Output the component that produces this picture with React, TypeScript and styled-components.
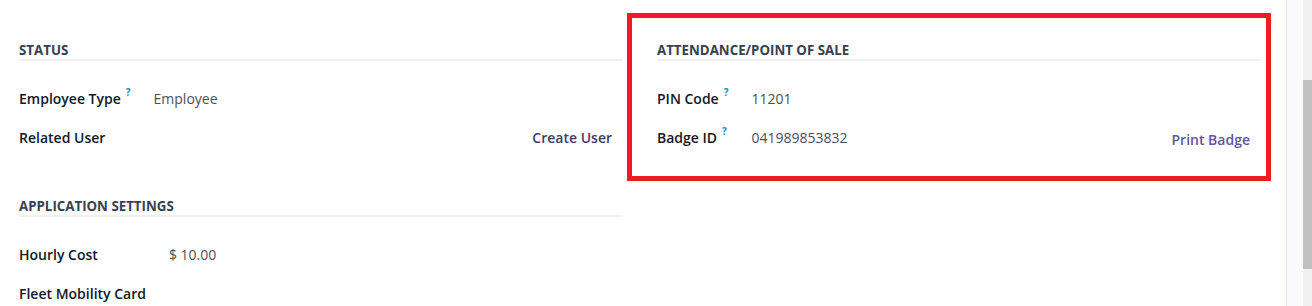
import React from 'react';
import styled, {createGlobalStyle} from "styled-components";

const GlobalStyle = createGlobalStyle`
  html, body {
    margin: 0;
    padding: 0;
    background: #ffffff;
    overflow: hidden;
  }
  body {
    font-family: "Open Sans", "Noto Sans", "Liberation Sans", sans-serif;
    font-size: 14px;
    color: #111827;
  }
`

type Field = {
    label: string,
    help?: boolean,
    value?: string,
    action?: string,
    actionTone?: 'dark' | 'light',
}

const status: Field[] = [
    {label: 'Employee Type', help: true, value: 'Employee'},
    {label: 'Related User', action: 'Create User', actionTone: 'dark'},
]
const appSettings: Field[] = [
    {label: 'Hourly Cost', value: '$ 10.00'},
    {label: 'Fleet Mobility Card'},
]
const attendance: Field[] = [
    {label: 'PIN Code', help: true, value: '11201'},
    {label: 'Badge ID', help: true, value: '041989853832', action: 'Print Badge', actionTone: 'light'},
]

const Group = ({title, fields, spaced}: { title: string, fields: Field[], spaced?: boolean }) => (
    <StyledGroup spaced={spaced}>
        <GroupTitle>{title}</GroupTitle>
        <FieldGrid>
            {fields.map(f => (
                <React.Fragment key={f.label}>
                    <Label>
                        {f.label}
                        {f.help && <Help>?</Help>}
                    </Label>
                    <ValueCell>
                        <Value>{f.value}</Value>
                        {f.action && <LinkButton tone={f.actionTone}>{f.action}</LinkButton>}
                    </ValueCell>
                </React.Fragment>
            ))}
        </FieldGrid>
    </StyledGroup>
)

export default function App() {
    return (
        <>
            <GlobalStyle/>
            <Screen>
                <Sheet>
                    <Column>
                        <Group title={'Status'} fields={status}/>
                        <Group title={'Application Settings'} fields={appSettings} spaced/>
                    </Column>
                    <Column>
                        <Highlight/>
                        <Group title={'Attendance/Point of Sale'} fields={attendance}/>
                    </Column>
                </Sheet>
                <SidePane>
                    <ScrollTrack>
                        <ScrollThumb/>
                    </ScrollTrack>
                </SidePane>
            </Screen>
        </>
    );
}

const Screen = styled.div`
  display: flex;
  width: 1312px;
  height: 306px;
  overflow: hidden;
`
const Sheet = styled.div`
  flex: 1;
  display: grid;
  grid-template-columns: 604px 604px;
  column-gap: 34px;
  align-items: start;
  padding: 0 25px 0 19px;
`
const Column = styled.div`
  position: relative;
  display: flex;
  flex-direction: column;
`
const Highlight = styled.div`
  position: absolute;
  top: 13px;
  left: -30px;
  right: -10px;
  height: 168px;
  box-sizing: border-box;
  border: 5px solid #ed1c24;
  pointer-events: none;
`
const StyledGroup = styled.div<{ spaced?: boolean }>`
  margin-top: ${props => props.spaced ? '40px' : '41px'};
`
const GroupTitle = styled.div`
  font-size: 13.3px;
  font-weight: 700;
  line-height: 18px;
  text-transform: uppercase;
  color: #374151;
  border-bottom: 2px solid #eef0f2;
`
const FieldGrid = styled.div`
  display: grid;
  grid-template-columns: max-content 1fr;
  grid-auto-rows: 39px;
  margin-top: 18px;
`
const Label = styled.div`
  display: flex;
  align-items: center;
  padding-right: 23px;
  font-size: 14px;
  font-weight: 600;
  color: #111827;
  white-space: nowrap;
`
const Help = styled.sup`
  align-self: flex-start;
  margin-top: 8px;
  margin-left: 5px;
  font-size: 10px;
  font-weight: 700;
  line-height: 1;
  color: #1b8cb8;
`
const ValueCell = styled.div`
  display: flex;
  align-items: center;
  justify-content: space-between;
  padding-right: 11px;
`
const Value = styled.span`
  font-size: 14px;
  color: #4b5057;
`
const LinkButton = styled.span<{ tone?: 'dark' | 'light' }>`
  font-size: 14px;
  font-weight: 600;
  color: ${props => props.tone === 'light' ? '#5f5794' : '#3f3d62'};
  margin-top: ${props => props.tone === 'light' ? '3px' : '0'};
`
const SidePane = styled.div`
  width: 25px;
  display: flex;
  justify-content: flex-end;
  background: #f9fafb;
  border-left: 1px solid #e6e8eb;
`
const ScrollTrack = styled.div`
  width: 9px;
  background: #f1f1f1;
  padding-top: 80px;
`
const ScrollThumb = styled.div`
  height: 189px;
  background: #c1c1c1;
`
